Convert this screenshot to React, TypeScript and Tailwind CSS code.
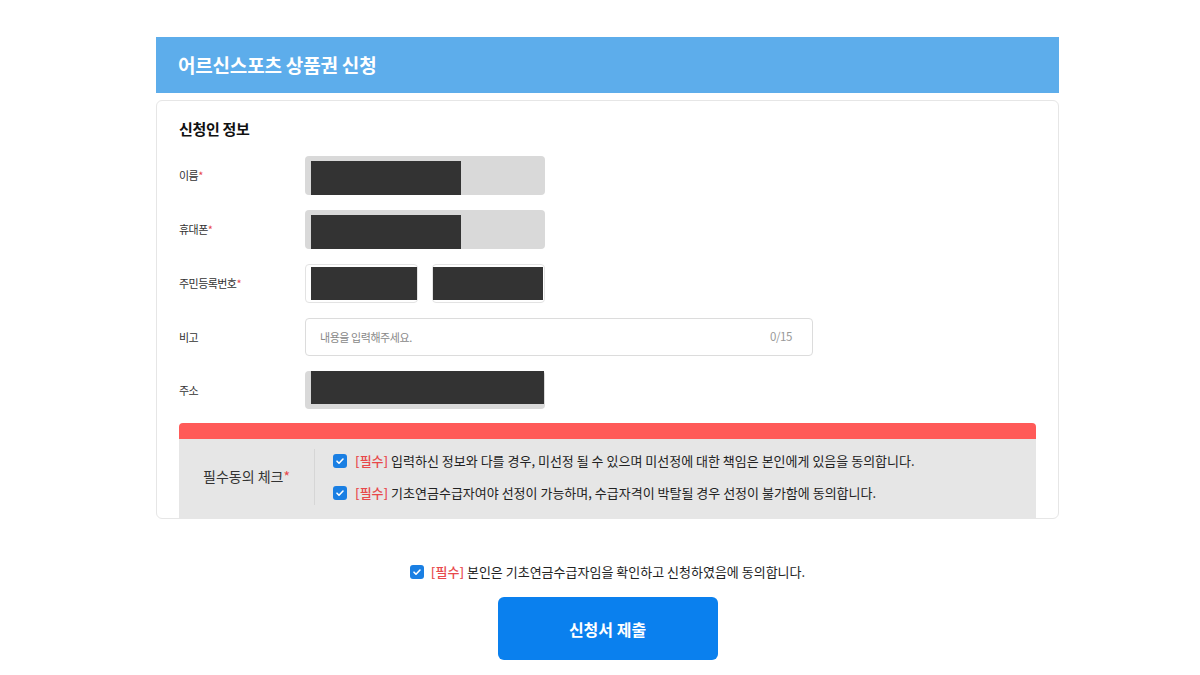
const font = { fontFamily: '"Noto Sans CJK KR", "Noto Sans", sans-serif' };

const CheckBox = () => (
  <span className="w-[14px] h-[14px] rounded-[3px] bg-[#1a7fe3] flex items-center justify-center flex-shrink-0">
    <svg width="10" height="10" viewBox="0 0 10 10" fill="none">
      <path d="M2 5.2l2 2 4-4.2" stroke="white" strokeWidth="1.6" strokeLinecap="round" strokeLinejoin="round" />
    </svg>
  </span>
);

const Req = () => <span className="text-[#e8484b]">*</span>;

const Tag = () => <span className="text-[#e8484b] font-medium">[필수]</span>;

const Redact = ({ w }: { w: string }) => <div className={`${w} h-full bg-[#333333]`}></div>;

const App = () => {
  return (
    <div className="w-[1200px] h-[675px] bg-white overflow-hidden text-[#222]" style={font}>
      <div className="ml-[156px] w-[903px] pt-[37px]">
        {/* Header */}
        <div className="h-[56px] bg-[#5dadeb] flex items-center pl-[22px]">
          <h1 className="text-white text-[19px] font-bold tracking-[-0.01em]">어르신스포츠 상품권 신청</h1>
        </div>

        {/* Form card */}
        <div className="mt-[7px] border border-[#e6e6e6] rounded-md px-[22px] pt-[16px]">
          <h2 className="text-[15px] font-bold tracking-[-0.02em] leading-[24px] text-[#111]">신청인 정보</h2>

          <div className="mt-[15px] flex flex-col gap-[15px]">
            <div className="flex items-center h-[39px]">
              <div className="w-[126px] text-[11px] tracking-[-0.05em] text-[#333]">이름<Req /></div>
              <div className="w-[240px] h-full bg-[#d9d9d9] rounded-[4px] pl-[6px] pt-[5px]">
                <Redact w="w-[150px]" />
              </div>
            </div>

            <div className="flex items-center h-[39px]">
              <div className="w-[126px] text-[11px] tracking-[-0.05em] text-[#333]">휴대폰<Req /></div>
              <div className="w-[240px] h-full bg-[#d9d9d9] rounded-[4px] pl-[6px] pt-[5px]">
                <Redact w="w-[150px]" />
              </div>
            </div>

            <div className="flex items-center h-[39px]">
              <div className="w-[126px] text-[11px] tracking-[-0.05em] text-[#333]">주민등록번호<Req /></div>
              <div className="flex gap-[14px] h-full">
                <div className="w-[113px] h-full border border-[#e3e3e3] rounded-[4px] pl-[5px] py-[2px]">
                  <Redact w="w-full" />
                </div>
                <div className="w-[113px] h-full border border-[#e3e3e3] rounded-[4px] py-[2px] pr-[1px]">
                  <Redact w="w-full" />
                </div>
              </div>
            </div>

            <div className="flex items-center h-[38px]">
              <div className="w-[126px] text-[11px] tracking-[-0.05em] text-[#333]">비고</div>
              <div className="w-[508px] h-full border border-[#dcdcdc] rounded-[4px] flex items-center justify-between pl-[14px] pr-[20px] text-[11px] tracking-[-0.04em]">
                <span className="text-[#888]">내용을 입력해주세요.</span>
                <span className="text-[#999] text-[11.5px]">0/15</span>
              </div>
            </div>

            <div className="flex items-center h-[38px]">
              <div className="w-[126px] text-[11px] tracking-[-0.05em] text-[#333]">주소</div>
              <div className="w-[240px] h-full bg-[#d9d9d9] rounded-[4px] pl-[6px] pr-[1px] pb-[5px]">
                <Redact w="w-full" />
              </div>
            </div>
          </div>

          {/* Agreement box */}
          <div className="mt-[14px] rounded-t-[4px] overflow-hidden">
            <div className="h-[16px] bg-[#ff5a58]"></div>
            <div className="h-[79px] bg-[#e6e6e6] flex items-center pb-[4px]">
              <div className="w-[135px] text-center text-[14px] text-[#333]">필수동의 체크<Req /></div>
              <div className="h-[56px] border-l border-[#d6d6d6] pl-[18px] flex flex-col justify-center gap-[18px] text-[13px] text-[#222]">
                <div className="flex items-center gap-[8px] leading-[14px]">
                  <CheckBox />
                  <span><Tag /> 입력하신 정보와 다를 경우, 미선정 될 수 있으며 미선정에 대한 책임은 본인에게 있음을 동의합니다.</span>
                </div>
                <div className="flex items-center gap-[8px] leading-[14px]">
                  <CheckBox />
                  <span><Tag /> 기초연금수급자여야 선정이 가능하며, 수급자격이 박탈될 경우 선정이 불가함에 동의합니다.</span>
                </div>
              </div>
            </div>
          </div>
        </div>

        {/* Final agreement + submit */}
        <div className="mt-[46px] flex flex-col items-center">
          <div className="flex items-center gap-[7px] text-[13px] text-[#222] leading-[14px]">
            <CheckBox />
            <span><Tag /> 본인은 기초연금수급자임을 확인하고 신청하였음에 동의합니다.</span>
          </div>
          <button className="mt-[18px] w-[220px] h-[63px] rounded-md bg-[#0a80ee] text-white text-[16px] font-bold">
            신청서 제출
          </button>
        </div>
      </div>
    </div>
  );
};

export default App;
